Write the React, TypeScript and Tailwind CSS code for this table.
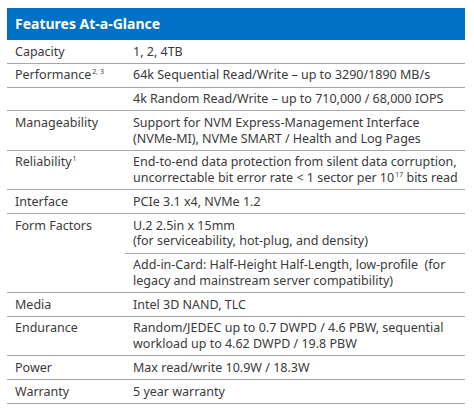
const Sup = ({ children }: { children: React.ReactNode }) => (
  <span className="relative -top-[5px] text-[7px] leading-none ml-px">{children}</span>
);

const rows: { label?: React.ReactNode; value: React.ReactNode; sub?: boolean }[] = [
  { label: "Capacity", value: "1, 2, 4TB" },
  {
    label: (
      <>
        Performance<Sup>2, 3</Sup>
      </>
    ),
    value: "64k Sequential Read/Write – up to 3290/1890 MB/s",
  },
  { value: "4k Random Read/Write – up to 710,000 / 68,000 IOPS" },
  {
    label: "Manageability",
    value: (
      <>
        Support for NVM Express-Management Interface
        <br />
        (NVMe-MI), NVMe SMART / Health and Log Pages
      </>
    ),
  },
  {
    label: (
      <>
        Reliability<Sup>1</Sup>
      </>
    ),
    value: (
      <>
        End-to-end data protection from silent data corruption,
        <br />
        uncorrectable bit error rate &lt; 1 sector per 10<Sup>17</Sup> bits read
      </>
    ),
  },
  { label: "Interface", value: "PCIe 3.1 x4, NVMe 1.2" },
  {
    label: "Form Factors",
    value: (
      <>
        U.2 2.5in x 15mm
        <br />
        (for serviceability, hot-plug, and density)
      </>
    ),
    sub: true,
  },
  {
    value: (
      <>
        Add-in-Card: Half-Height Half-Length, low-profile&nbsp; (for
        <br />
        legacy and mainstream server compatibility)
      </>
    ),
  },
  { label: "Media", value: "Intel 3D NAND, TLC" },
  {
    label: "Endurance",
    value: (
      <>
        Random/JEDEC up to 0.7 DWPD / 4.6 PBW, sequential
        <br />
        workload up to 4.62 DWPD / 19.8 PBW
      </>
    ),
  },
  { label: "Power", value: "Max read/write 10.9W / 18.3W" },
  { label: "Warranty", value: "5 year warranty" },
];

export default function App() {
  return (
    <div
      className="w-[474px] h-[409px] bg-white pt-2 pl-[7px]"
      style={{ fontFamily: '"Noto Sans", "Open Sans", sans-serif' }}
    >
      <div className="w-[458px] text-[12.5px] leading-[15.75px] text-[#3a3a3a]">
        <div className="h-8 bg-[#0071c5] flex items-center pl-2 text-white font-bold text-[14px]">
          Features At-a-Glance
        </div>
        {rows.map((r, i) => (
          <div key={i} className={r.sub ? "flex" : "flex border-b border-[#a6a6a6]"}>
            <div className="w-[118px] shrink-0 pl-2 py-[3.5px] whitespace-nowrap">{r.label}</div>
            <div
              className={
                r.sub
                  ? "flex-1 pl-2 py-[3.5px] whitespace-nowrap border-b border-[#a6a6a6]"
                  : "flex-1 pl-2 py-[3.5px] whitespace-nowrap"
              }
            >
              {r.value}
            </div>
          </div>
        ))}
      </div>
    </div>
  );
}
